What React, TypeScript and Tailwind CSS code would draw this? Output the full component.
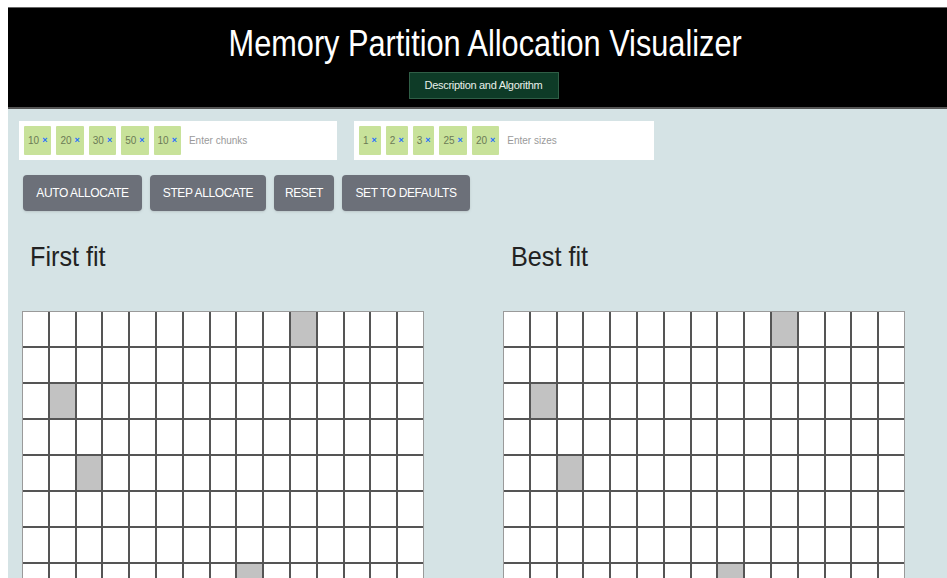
import React from "react";

const font = { fontFamily: '"Liberation Sans", Arial, sans-serif' };

const chunks = [10, 20, 30, 50, 10];
const sizes = [1, 2, 3, 25, 20];

// cells that hold an allocated block, as row-col
const filled = ["0-10", "2-1", "4-2", "7-8"];

const Tag = ({ value }: { value: number }) => (
  <div className="flex items-center gap-[3px] h-[29px] px-[4px] bg-[#c8e29a] rounded-[1px] text-[10px] text-[#6b7a55]">
    <span>{value}</span>
    <span className="text-[9px] font-bold text-[#1f6fff] leading-none">×</span>
  </div>
);

const TagInput = ({ items, placeholder, width }: { items: number[]; placeholder: string; width: string }) => (
  <div className={`flex items-center gap-[5px] h-[39px] bg-white px-[5px] ${width}`}>
    {items.map((v, i) => (
      <Tag key={i} value={v} />
    ))}
    <span className="ml-[3px] text-[10px] text-[#9a9a9a]">{placeholder}</span>
  </div>
);

const MemoryGrid = () => (
  <div className="grid grid-cols-[repeat(15,1fr)] gap-[2px] w-[402px] bg-[#555] border border-[#9a9a9a]">
    {Array.from({ length: 10 }).map((_, r) =>
      Array.from({ length: 15 }).map((_, c) => (
        <div
          key={`${r}-${c}`}
          className={`h-[34px] ${filled.includes(`${r}-${c}`) ? "bg-[#c2c2c2]" : "bg-white"}`}
        />
      ))
    )}
  </div>
);

const Panel = ({ title }: { title: string }) => (
  <div className="w-[481px] shrink-0">
    <h2 className="ml-[8px] mt-[32px] text-[28px] text-[#222] leading-none origin-left scale-x-90">{title}</h2>
    <div className="mt-[40px]">
      <MemoryGrid />
    </div>
  </div>
);

export default function App() {
  return (
    <div className="h-screen overflow-hidden bg-white pl-[8px] pt-[7px]" style={font}>
      <div className="h-full bg-[#d5e3e5]">
        <header className="h-[102px] bg-black border-t border-[#666] border-b-2 border-b-[#555] flex flex-col items-center">
          <h1 className="mt-[14px] ml-[16px] text-[37px] leading-[44px] text-white scale-x-[0.83] whitespace-nowrap">
            Memory Partition Allocation Visualizer
          </h1>
          <button className="mt-[6px] ml-[12px] h-[27px] w-[150px] bg-[#0e3b27] border border-[#2f5e46] text-[11px] tracking-[-0.3px] text-[#e8f0ea]">
            Description and Algorithm
          </button>
        </header>

        <div className="flex gap-[17px] mt-[12px] ml-[11px]">
          <TagInput items={chunks} placeholder="Enter chunks" width="w-[318px]" />
          <TagInput items={sizes} placeholder="Enter sizes" width="w-[300px]" />
        </div>

        <div className="flex gap-[8px] mt-[15px] ml-[15px]">
          {[
            ["AUTO ALLOCATE", "w-[119px]"],
            ["STEP ALLOCATE", "w-[116px]"],
            ["RESET", "w-[60px]"],
            ["SET TO DEFAULTS", "w-[128px]"],
          ].map(([label, w]) => (
            <button
              key={label}
              className={`h-[36px] ${w} rounded-[4px] bg-[#6c7079] text-white text-[12px] tracking-[-0.4px] shadow-sm`}
            >
              {label}
            </button>
          ))}
        </div>

        <div className="flex ml-[14px]">
          <Panel title="First fit" />
          <Panel title="Best fit" />
        </div>
      </div>
    </div>
  );
}
